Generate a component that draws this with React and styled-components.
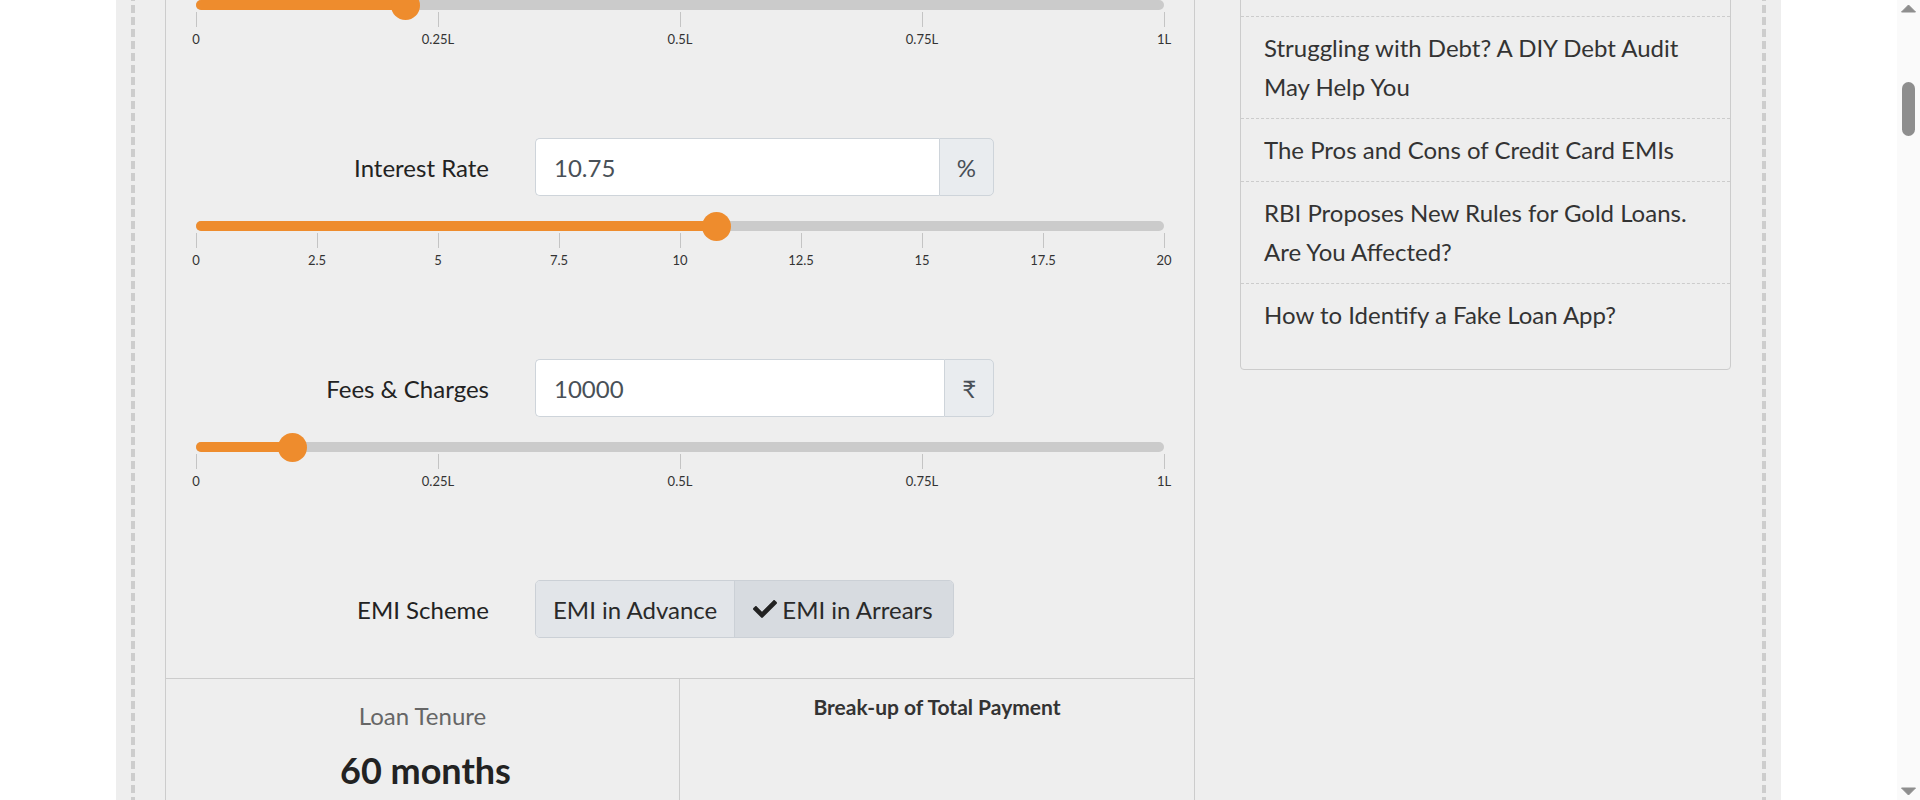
import React, { useLayoutEffect, useRef, useState } from "react";
import styled, { createGlobalStyle } from "styled-components";
import { FaCheck } from "react-icons/fa";

const ORANGE = "#ee8c2d";
const RAIL = 23;
const ARROW = 16;

const GlobalStyle = createGlobalStyle`
  *, *::before, *::after { box-sizing: border-box; }
  html { scrollbar-width: none; }
  html::-webkit-scrollbar { display: none; }
  html, body { margin: 0; padding: 0; background: #ffffff; }
  body {
    padding-right: ${RAIL}px;
    font-family: Lato, "Open Sans", "Noto Sans", sans-serif;
    color: #333;
  }
`;

/* drawing of the browser's vertical scrollbar, laid over the page's right edge */
const ScrollRail = styled.div`
  position: fixed;
  top: 0;
  right: 0;
  bottom: 0;
  width: ${RAIL}px;
  background: #fafafa;
  display: flex;
  flex-direction: column;
  z-index: 10;
`;

const RailArrow = styled.svg`
  display: block;
  flex: none;
`;

const RailTrack = styled.div`
  position: relative;
  flex: 1;
`;

const RailThumb = styled.div`
  position: absolute;
  left: 5px;
  width: 13px;
  border-radius: 6.5px;
  background: #8e8e8e;
`;

const Page = styled.div`
  width: 1665px;
  margin: 0 auto;
  background: #eeeeee;
  padding: 0 15px;
`;

const Frame = styled.div`
  padding: 0 35px 0 34px;
  background-image: repeating-linear-gradient(to bottom, #cdcdcd 0 8px, transparent 8px 12px),
    repeating-linear-gradient(to bottom, #cdcdcd 0 8px, transparent 8px 12px);
  background-size: 4px 100%, 4px 100%;
  background-position: left 0 top 4px, right 0 top 4px;
  background-repeat: no-repeat;
`;

const Hero = styled.header`
  height: 780px;
  display: flex;
  flex-direction: column;
  gap: 24px;
  padding-top: 30px;
`;

const SiteBar = styled.nav`
  display: flex;
  align-items: center;
  justify-content: space-between;
  height: 70px;
  border-bottom: 1px solid #ccc;
`;

const Brand = styled.div`
  font-size: 30px;
  font-weight: 700;
  color: #222;
`;

const NavLinks = styled.div`
  display: flex;
  gap: 30px;
  font-size: 20px;
  color: #444;
`;

const PageTitle = styled.h1`
  margin: 20px 0 0;
  font-size: 40px;
  font-weight: 700;
  color: #222;
`;

const Intro = styled.p`
  margin: 0;
  font-size: 21px;
  line-height: 1.7;
  color: #444;
  max-width: 1400px;
`;

const MainRow = styled.div`
  display: flex;
  align-items: flex-start;
  gap: 45px;
`;

const Panel = styled.section`
  width: 1030px;
  border: 1px solid #cccccc;
  border-bottom: none;
`;

const Tabs = styled.div`
  display: flex;
  height: 72px;
  border-bottom: 1px solid #ccc;
`;

const Tab = styled.div`
  flex: 1;
  display: flex;
  align-items: center;
  justify-content: center;
  font-size: 24px;
  color: ${(p) => (p.$active ? "#fff" : "#333")};
  background: ${(p) => (p.$active ? ORANGE : "transparent")};
`;

const Form = styled.div`
  padding: 59px 30px 40px;
`;

const Field = styled.div`
  padding-bottom: 87px;
`;

const FieldRow = styled.div`
  display: grid;
  grid-template-columns: 293px auto;
  column-gap: 46px;
  align-items: center;
  height: 58px;
  justify-content: start;
`;

const Label = styled.label`
  text-align: right;
  font-size: 24px;
  color: #222;
`;

const InputGroup = styled.div`
  display: flex;
  width: 459px;
  height: 58px;
`;

const Input = styled.input`
  flex: 1;
  min-width: 0;
  height: 100%;
  border: 1px solid #ced4da;
  border-right: none;
  border-radius: 5px 0 0 5px;
  background: #fff;
  padding: 0 18px;
  font-family: inherit;
  font-size: 24px;
  color: #495057;
  outline: none;
`;

const Addon = styled.span`
  display: flex;
  align-items: center;
  padding: 0 17px;
  border: 1px solid #ced4da;
  border-radius: 0 5px 5px 0;
  background: #e9ecef;
  font-size: 24px;
  color: #495057;
`;

const Slider = styled.div`
  position: relative;
  height: 60px;
  margin-top: 16px;
`;

const Track = styled.div`
  position: absolute;
  left: 0;
  right: 0;
  top: 9px;
  height: 10px;
  border-radius: 5px;
  background: #cbcbcb;
`;

const Fill = styled.div`
  height: 100%;
  border-radius: 5px 0 0 5px;
  background: ${ORANGE};
`;

const Thumb = styled.div`
  position: absolute;
  top: 0;
  width: 29px;
  height: 29px;
  margin-left: -14.5px;
  border-radius: 50%;
  background: ${ORANGE};
`;

const Tick = styled.div`
  position: absolute;
  top: 21px;
  width: 1px;
  height: 15px;
  background: #c4c4c4;
`;

const TickLabel = styled.div`
  position: absolute;
  top: 41px;
  transform: translateX(-50%);
  font-size: 13px;
  line-height: 15px;
  color: #333;
  white-space: nowrap;
`;

const SchemeGroup = styled.div`
  display: inline-flex;
  height: 58px;
  border: 1px solid #cbd0d6;
  border-radius: 5px;
  overflow: hidden;
  justify-self: start;
`;

const SchemeButton = styled.button`
  display: flex;
  align-items: center;
  gap: 5px;
  padding: ${(p) => (p.$active ? "0 20px 0 18px" : "0 17px")};
  border: none;
  border-left: ${(p) => (p.$active ? "1px solid #cbd0d6" : "none")};
  background: ${(p) => (p.$active ? "#d7dbe0" : "#e2e5e9")};
  font-family: inherit;
  font-size: 24px;
  color: #2a2a2a;
  cursor: pointer;
`;

const Results = styled.div`
  display: grid;
  grid-template-columns: 1fr 1fr;
  border-top: 1px solid #cccccc;
  border-bottom: 1px solid #cccccc;
`;

const ResultCol = styled.div`
  padding: 20px 20px 40px;
  text-align: center;
  border-right: ${(p) => (p.$divider ? "1px solid #cccccc" : "none")};
`;

const StatName = styled.div`
  font-size: 24px;
  line-height: 34.5px;
  color: #666;
  margin-top: ${(p) => (p.$first ? "0" : "30px")};
`;

const StatValue = styled.div`
  margin-top: 15px;
  padding-left: 6px;
  font-size: 36px;
  line-height: 43px;
  font-weight: 700;
  color: #222;
`;

const ChartTitle = styled.div`
  margin-top: -7px;
  font-size: 21px;
  line-height: 30px;
  font-weight: 700;
  color: #333;
`;

const ChartBox = styled.div`
  display: flex;
  justify-content: center;
  margin-top: 140px;
`;

const Sidebar = styled.aside`
  width: 491px;
`;

const Card = styled.div`
  border: 1px solid #cccccc;
  border-radius: 4px;
  padding-bottom: 23px;
`;

const CardTitle = styled.div`
  padding: 12.5px 23px 14px;
  font-size: 24px;
  line-height: 39px;
  font-weight: 700;
  color: #222;
`;

const ArticleItem = styled.a`
  display: block;
  padding: 11.5px 23px;
  font-size: 24px;
  line-height: 39px;
  color: #333;
  text-decoration: none;
  & + & {
    border-top: 1px dashed #cccccc;
  }
`;

const Article = styled.article`
  margin-top: 40px;
  min-height: 9400px;
  padding: 20px 0;
  font-size: 21px;
  line-height: 1.7;
  color: #444;
`;

const ArticleHeading = styled.h2`
  margin: 0 0 16px;
  font-size: 30px;
  color: #222;
`;

const lakhTicks = [
  [0, "0"],
  [25000, "0.25L"],
  [50000, "0.5L"],
  [75000, "0.75L"],
  [100000, "1L"],
];

const fields = [
  { id: "amount", label: "Loan Amount", value: "21600", unit: "₹", max: 100000, ticks: lakhTicks },
  {
    id: "rate",
    label: "Interest Rate",
    value: "10.75",
    unit: "%",
    max: 20,
    ticks: [0, 2.5, 5, 7.5, 10, 12.5, 15, 17.5, 20].map((v) => [v, String(v)]),
  },
  { id: "fees", label: "Fees & Charges", value: "10000", unit: "₹", max: 100000, ticks: lakhTicks },
];

const articles = [
  "Home Loan vs Loan Against Property: Which Is Better?",
  "5 Tips to Improve Your CIBIL Score",
  "Struggling with Debt? A DIY Debt Audit May Help You",
  "The Pros and Cons of Credit Card EMIs",
  "RBI Proposes New Rules for Gold Loans. Are You Affected?",
  "How to Identify a Fake Loan App?",
];

function RangeSlider({ value, max, ticks }) {
  const pct = (Number(value) / max) * 100;
  return (
    <Slider>
      <Track>
        <Fill style={{ width: `${pct}%` }} />
      </Track>
      <Thumb style={{ left: `${pct}%` }} />
      {ticks.map(([v, text]) => (
        <React.Fragment key={text}>
          <Tick style={{ left: `calc(${(v / max) * 100}% - 0.5px)` }} />
          <TickLabel style={{ left: `${(v / max) * 100}%` }}>{text}</TickLabel>
        </React.Fragment>
      ))}
    </Slider>
  );
}

function PieChart() {
  return (
    <svg width="320" height="320" viewBox="0 0 320 320">
      <circle cx="160" cy="160" r="150" fill="#88a825" />
      <path d="M160 160 L160 10 A150 150 0 0 1 290 235 Z" fill={ORANGE} />
    </svg>
  );
}

function Scrollbar({ thumb }) {
  return (
    <ScrollRail aria-hidden="true">
      <RailArrow width={RAIL} height={ARROW} viewBox={`0 0 ${RAIL} ${ARROW}`}>
        <polygon points="4.5,12 11.5,5 18.5,12" fill="#8e8e8e" stroke="#8e8e8e" strokeLinejoin="round" />
      </RailArrow>
      <RailTrack>
        <RailThumb style={{ top: thumb.top, height: thumb.height }} />
      </RailTrack>
      <RailArrow width={RAIL} height={ARROW} viewBox={`0 0 ${RAIL} ${ARROW}`}>
        <polygon points="4.5,4 11.5,11 18.5,4" fill="#8e8e8e" stroke="#8e8e8e" strokeLinejoin="round" />
      </RailArrow>
    </ScrollRail>
  );
}

export default function App() {
  const anchor = useRef(null);
  const [thumb, setThumb] = useState({ top: 66, height: 53 });

  useLayoutEffect(() => {
    const el = anchor.current;
    if (!el) return;
    const top = el.getBoundingClientRect().top + window.scrollY;
    window.scrollTo(0, top - 138);
    const docH = document.documentElement.scrollHeight;
    const viewH = window.innerHeight;
    const trackLen = viewH - ARROW * 2;
    setThumb({
      top: (trackLen * window.scrollY) / docH,
      height: Math.max(20, (trackLen * viewH) / docH) + 2,
    });
  }, []);

  return (
    <>
      <GlobalStyle />
      <Page>
        <Frame>
          <Hero>
            <SiteBar>
              <Brand>EMI Calculator</Brand>
              <NavLinks>
                <span>Home</span>
                <span>Loan Calculator</span>
                <span>Articles</span>
                <span>Contact</span>
              </NavLinks>
            </SiteBar>
            <PageTitle>Personal Loan EMI Calculator</PageTitle>
            <Intro>
              Use the calculator below to work out the equated monthly instalment of a
              personal loan. Adjust the loan amount, interest rate, fees and tenure to see
              how the EMI, the total interest payable and the total payment change.
            </Intro>
          </Hero>
          <MainRow>
            <Panel>
              <Tabs>
                <Tab>Home Loan</Tab>
                <Tab $active>Personal Loan</Tab>
                <Tab>Car Loan</Tab>
              </Tabs>
              <Form>
                {fields.map((f) => (
                  <Field key={f.id}>
                    <FieldRow ref={f.id === "rate" ? anchor : undefined}>
                      <Label htmlFor={f.id}>{f.label}</Label>
                      <InputGroup>
                        <Input id={f.id} defaultValue={f.value} />
                        <Addon>{f.unit}</Addon>
                      </InputGroup>
                    </FieldRow>
                    <RangeSlider value={f.value} max={f.max} ticks={f.ticks} />
                  </Field>
                ))}
                <FieldRow>
                  <Label>EMI Scheme</Label>
                  <SchemeGroup>
                    <SchemeButton type="button">EMI in Advance</SchemeButton>
                    <SchemeButton type="button" $active>
                      <FaCheck size={24} color="#222" />
                      EMI in Arrears
                    </SchemeButton>
                  </SchemeGroup>
                </FieldRow>
              </Form>
              <Results>
                <ResultCol $divider>
                  <StatName $first>Loan Tenure</StatName>
                  <StatValue>60 months</StatValue>
                  <StatName>Loan EMI</StatName>
                  <StatValue>₹ 682</StatValue>
                  <StatName>Total Interest Payable</StatName>
                  <StatValue>₹ 19,324</StatValue>
                </ResultCol>
                <ResultCol>
                  <ChartTitle>Break-up of Total Payment</ChartTitle>
                  <ChartBox>
                    <PieChart />
                  </ChartBox>
                </ResultCol>
              </Results>
            </Panel>
            <Sidebar>
              <Card>
                <CardTitle>Recent Articles</CardTitle>
                {articles.map((a) => (
                  <ArticleItem key={a} href="#">
                    {a}
                  </ArticleItem>
                ))}
              </Card>
            </Sidebar>
          </MainRow>
          <Article>
            <ArticleHeading>What is EMI?</ArticleHeading>
            Equated Monthly Instalment, or EMI, is the fixed amount a borrower pays to the
            lender on a set date each month. It covers both interest and principal, so the
            loan is fully repaid by the end of its tenure.
          </Article>
        </Frame>
      </Page>
      <Scrollbar thumb={thumb} />
    </>
  );
}
